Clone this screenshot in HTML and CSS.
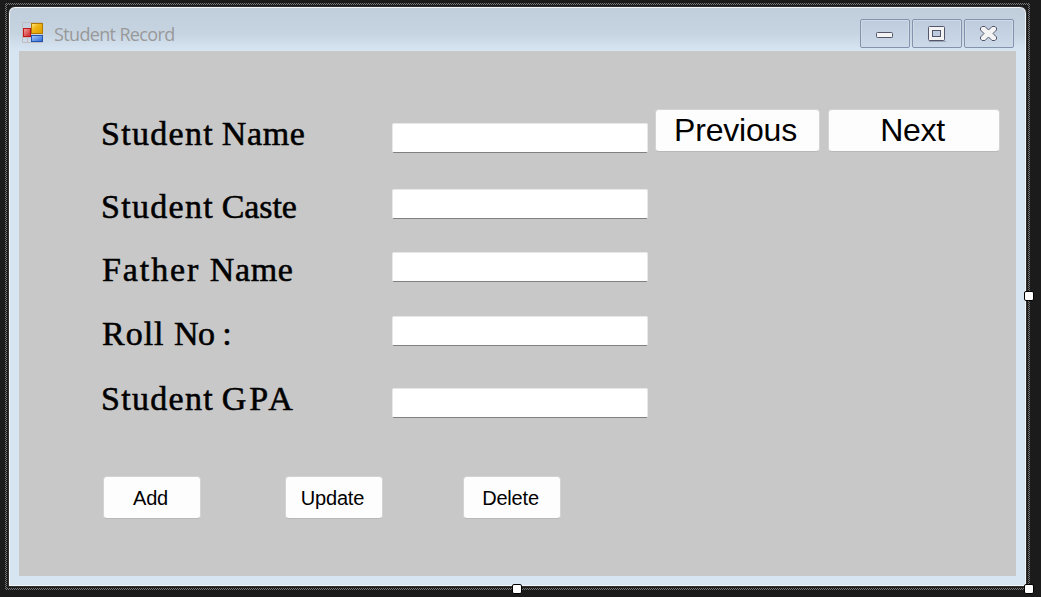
FILE: index.html
```html
<!DOCTYPE html>
<html lang="en">
<head>
<meta charset="utf-8">
<title>Student Record</title>
<link rel="stylesheet" href="styles.css">
</head>
<body>
<div class="selection">
  <main class="window">
    <header class="titlebar">
      <svg class="app-icon" width="22" height="22" viewBox="0 0 22 22">
        <defs>
          <linearGradient id="gold" x1="0" y1="0" x2="1" y2="1"><stop offset="0" stop-color="#ffec83"/><stop offset=".4" stop-color="#f0b414"/><stop offset="1" stop-color="#d99b00"/></linearGradient>
          <linearGradient id="red" x1="0" y1="0" x2="1" y2="1"><stop offset="0" stop-color="#f5a3a0"/><stop offset="1" stop-color="#c82020"/></linearGradient>
          <linearGradient id="blue" x1="0" y1="0" x2="1" y2="1"><stop offset="0" stop-color="#a4ccff"/><stop offset="1" stop-color="#2c67d2"/></linearGradient>
        </defs>
        <path d="M.5.5h20v20H.5zM.5 15.500h9M5.500 15v5M9.500.5v20" fill="none" stroke="#c0bcbf"/>
        <rect x="9.500" y="1.500" width="11" height="10" fill="url(#gold)" stroke="#b07a00"/>
        <rect x="1.500" y="6.500" width="7" height="8" fill="url(#red)" stroke="#c01818"/>
        <rect x="9.500" y="13.500" width="11" height="6" fill="url(#blue)" stroke="#2454ae"/>
      </svg>
      <h1 class="title">Student Record</h1>
      <div class="controls">
        <button class="control" aria-label="Minimize">
          <svg width="20" height="18" viewBox="0 0 20 18"><path d="M3 12h15v1H3z" fill="#9aa5b5"/><rect x="1.500" y="7.500" width="16" height="5" rx="1" fill="#f3f3f3" stroke="#53566b"/></svg>
        </button>
        <button class="control" aria-label="Maximize">
          <svg width="20" height="18" viewBox="0 0 20 18"><path d="M2 16h17v1H2z" fill="#9aa5b5"/><rect x="1.500" y="1.500" width="16" height="14" rx="1" fill="#f3f3f3" stroke="#53566b"/><rect x="5.500" y="5.500" width="8" height="6" fill="#bdcddd" stroke="#53566b"/></svg>
        </button>
        <button class="control" aria-label="Close">
          <svg width="20" height="18" viewBox="0 0 20 18"><path d="M3 1.500h3l3.500 3.500L13 1.500h3L17.500 3v2L14 8.500l3.500 3.500v2L16 15.500h-3L9.500 12 6 15.500H3L1.500 14v-2L5 8.500 1.500 5V3z" fill="#f3f3f3" stroke="#53566b"/></svg>
        </button>
      </div>
    </header>
    <form class="client">
      <div class="record">
        <label class="label" for="name">Student <span class="name">Name</span></label><input class="field lowered" id="name">
        <div class="navigation"><button type="button" class="button previous">Previous</button><button type="button" class="button next">Next</button></div>
        <label class="label" for="caste">Student <span class="caste">Caste</span></label><input class="field" id="caste">
        <label class="label father" for="father">Father <span class="name">Name</span></label><input class="field" id="father">
        <label class="label roll" for="roll">Roll <span class="number">No :</span></label><input class="field" id="roll">
        <label class="label" for="gpa">Student <span class="gpa">GPA</span></label><input class="field lowered" id="gpa">
      </div>
      <div class="actions">
        <button type="button" class="button action">Add</button>
        <button type="button" class="button action">Update</button>
        <button type="button" class="button action delete">Delete</button>
      </div>
    </form>
  </main>
  <i class="handle right"></i><i class="handle bottom"></i><i class="handle corner"></i>
</div>
</body>
</html>
```
FILE: styles.css
```css
* { box-sizing: border-box; }
body {
  margin: 0;
  width: 1041px;
  height: 597px;
  padding: 3px 0 0 5px;
  overflow: hidden;
  background: #1b1b1b;
}
.selection {
  position: relative;
  width: 1025px;
  height: 587px;
  padding: 3px;
  background: repeating-conic-gradient(#777 0 25%, #1b1b1b 0 50%) 0 0 / 2px 2px;
}
.selection::before {
  content: "";
  position: absolute;
  inset: 2px;
  background: #1b1b1b;
}
.window {
  position: relative;
  width: 1019px;
  height: 581px;
  padding: 0 9px 0 10px;
  border: 1px solid #303030;
  border-radius: 7px 7px 0 0;
  background: linear-gradient(#c0cedc, #c6d4e1 26px, #d7e4f1 43px, #d7e4f1);
  box-shadow: inset 0 0 0 1px #f2f5f8, 0 0 0 1px #1b1b1b;
}
.titlebar {
  display: flex;
  height: 44px;
  padding: 12px 3px 0 3px;
}
.app-icon { margin-top: 3px; }
.title {
  margin: 3px 0 0 10px;
  font: 400 18px/24px "Open Sans", "Noto Sans", sans-serif;
  letter-spacing: -.65px;
  color: #999;
}
.controls { display: flex; gap: 2px; margin-left: auto; }
.control {
  display: flex;
  align-items: flex-start;
  width: 50px;
  height: 29px;
  padding: 5px 0 0 14px;
  border: 1px solid #8493ad;
  border-radius: 2px;
  background: linear-gradient(#bdcbdc, #cbd9e9);
  box-shadow: inset 0 0 0 1px #cedae8;
}
.control svg { flex: none; }
.client {
  width: 997px;
  height: 525px;
  padding: 66px 16px 0 82px;
  background: #c8c8c8;
}
.record {
  display: grid;
  grid-template: 73px 63px 64px 65px 95px / 291px 256px 353px;
  align-items: start;
}
.label {
  grid-column: 1;
  font: 34px/34px "Liberation Serif", serif;
  letter-spacing: 1.3px;
  word-spacing: -2px;
  white-space: nowrap;
  color: #000;
  -webkit-text-stroke: .55px #000;
}
.father { letter-spacing: 1.9px; padding-left: 1px; word-spacing: -.8px; }
.roll { letter-spacing: 1px; padding-left: 1px; word-spacing: 0; }
.name { letter-spacing: .6px; }
.caste { letter-spacing: -.1px; }
.number { letter-spacing: -.6px; word-spacing: 0; }
.gpa { letter-spacing: 3px; }
.field {
  grid-column: 2;
  width: 256px;
  height: 30px;
  margin: -1px 0 0;
  border: 1px solid #e8e8e8;
  border-bottom-color: #808080;
  border-radius: 2px;
  outline: 0;
  background: #fff;
}
.lowered { margin-top: 6px; }
.navigation {
  grid-area: 1 / 3;
  display: flex;
  gap: 8px;
  margin: -8px 0 0 7px;
}
.button {
  flex: none;
  height: 43px;
  padding: 0;
  border: 1px solid #d3d3d3;
  border-bottom-color: #b8b8b8;
  border-radius: 4px;
  background: #fdfdfd;
  color: #000;
  font: 32px/38px "Liberation Sans", Arial, sans-serif;
}
.previous { width: 165px; padding: 0 4px 2px 0; letter-spacing: -.2px; }
.next { width: 172px; padding: 0 3px 2px 0; letter-spacing: -.3px; }
.actions { display: flex; gap: 84px; padding-left: 2px; margin-top: -1px; }
.action { width: 98px; font-size: 20px; padding-right: 3px; letter-spacing: -.2px; }
.delete { margin-left: -4px; }
.handle {
  position: absolute;
  width: 10px;
  height: 10px;
  border: 1px solid #000;
  border-radius: 2px;
  background: #fff;
}
.right { left: 1019px; top: 288px; }
.bottom { left: 507px; top: 581px; }
.corner { left: 1019px; top: 581px; }
```
